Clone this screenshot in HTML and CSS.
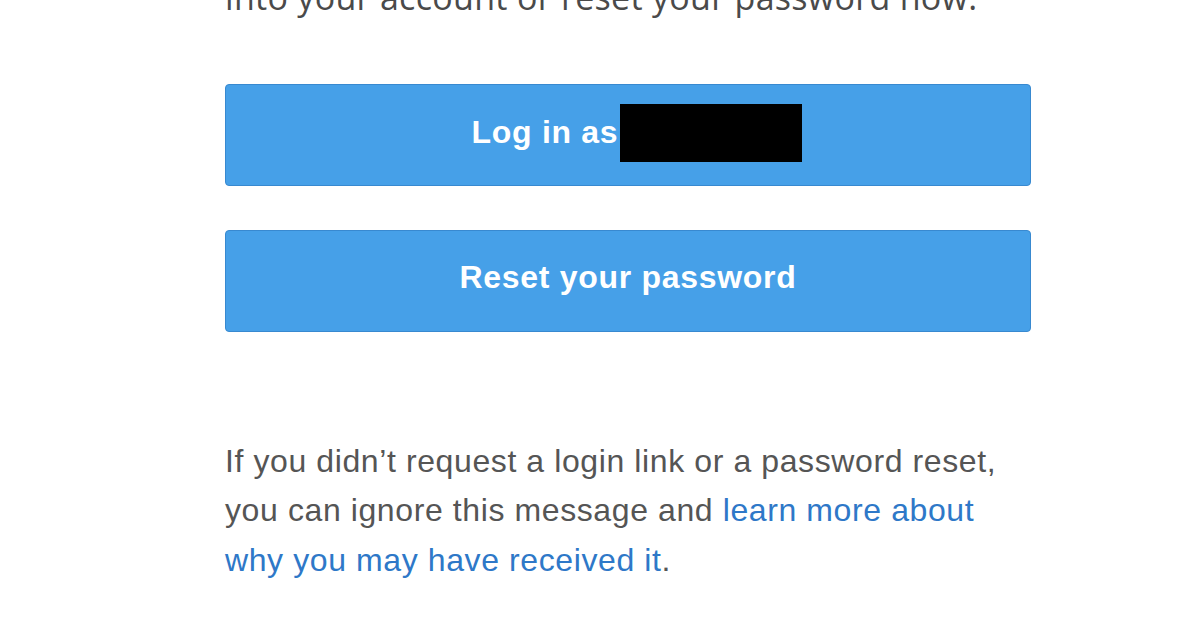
FILE: index.html
```html
<!DOCTYPE html>
<html lang="en">
<head>
<meta charset="utf-8">
<title>Log in or reset your password</title>
<link rel="stylesheet" href="styles.css">
</head>
<body>
<main class="mail">
  <p class="intro">into your account or reset your password now.</p>
  <div class="actions">
    <a class="btn btn-login" href="#">Log in as<span class="redacted"></span></a>
    <a class="btn" href="#">Reset your password</a>
  </div>
  <p class="note">If you didn’t request a login link or a password reset, you can ignore this message and <a class="link" href="#">learn more about why you may have received it</a>.</p>
</main>
</body>
</html>
```
FILE: styles.css
```css
html, body {
  margin: 0;
  padding: 0;
  background: #ffffff;
}

.mail {
  width: 806px;
  margin-left: 225px;
  font-family: "Liberation Sans", Arial, sans-serif;
}

.intro {
  margin: -27px 0 0 0;
  font-family: "Open Sans", "Liberation Sans", sans-serif;
  font-size: 34px;
  line-height: 49.5px;
  letter-spacing: 0.3px;
  color: #4a4a4a;
  white-space: nowrap;
}

.actions {
  display: flex;
  flex-direction: column;
  gap: 44px;
  margin-top: 61px;
}

.btn {
  display: flex;
  align-items: center;
  justify-content: center;
  box-sizing: border-box;
  height: 102px;
  padding-bottom: 6px;
  background: #46a0e8;
  border: 1px solid #3889d0;
  border-radius: 4px;
  color: #ffffff;
  font-weight: bold;
  font-size: 32px;
  letter-spacing: 0.7px;
  text-decoration: none;
}

.btn-login {
  padding-left: 18px;
  padding-bottom: 4px;
}

.redacted {
  display: inline-block;
  width: 182px;
  height: 58px;
  margin-left: 2px;
  background: #000000;
}

.note {
  margin: 105px 0 0 0;
  font-size: 32px;
  line-height: 49.5px;
  letter-spacing: 0.6px;
  color: #555555;
}

.link {
  color: #2e78c8;
  text-decoration: none;
}
```
